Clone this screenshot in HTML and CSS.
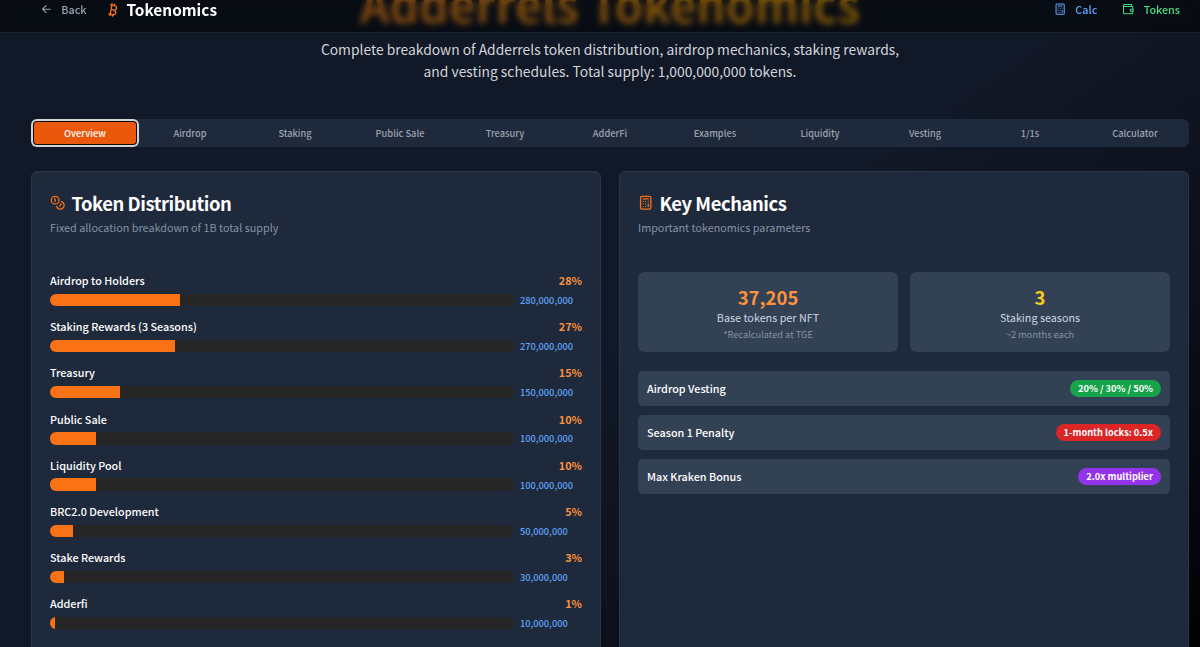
FILE: index.html
```html
<!DOCTYPE html>
<html lang="en">

<head>
    <meta charset="UTF-8">
    <meta name="viewport" content="width=device-width, initial-scale=1.0">
    <title>Tokenomics</title>
    <link rel="stylesheet" href="styles.css">
</head>

<body>
    <!-- Top bar -->
    <header class="topbar">
        <div class="topbar-group">
            <a class="back" href="#">
                <svg class="icon" viewBox="0 0 24 24"><path d="M12 5l-7 7 7 7M5 12h15"/></svg>
                <span>Back</span>
            </a>
            <div class="brand">
                <svg class="icon icon-btc" viewBox="0 0 24 24"><path d="M11.767 19.089c4.924.868 6.140-6.025 1.216-6.894m-1.216 6.894L5.860 18.047m5.908 1.042-.347 1.970m1.563-8.864c4.924.869 6.140-6.025 1.215-6.893m-1.215 6.893-3.940-.694m5.155-6.200L8.290 4.260m5.908 1.042.348-1.970M7.480 20.364l3.126-17.727"/></svg>
                <span>Tokenomics</span>
            </div>
        </div>
        <nav class="topbar-links">
            <a class="link-calc" href="#">
                <svg class="icon" viewBox="0 0 24 24"><rect x="4" y="2" width="16" height="20" rx="2"/><path d="M8 6h8M16 14v4M16 10h.01M12 10h.01M8 10h.01M12 14h.01M8 14h.01M12 18h.01M8 18h.01"/></svg>
                <span>Calc</span>
            </a>
            <a class="link-tokens" href="#">
                <svg class="icon" viewBox="0 0 24 24"><path d="M19 7V4a1 1 0 0 0-1-1H5a2 2 0 0 0 0 4h15a1 1 0 0 1 1 1v4h-3a2 2 0 0 0 0 4h3a1 1 0 0 0 1-1v-2a1 1 0 0 0-1-1M3 5v14a2 2 0 0 0 2 2h15a1 1 0 0 0 1-1v-4"/></svg>
                <span>Tokens</span>
            </a>
        </nav>
    </header>

    <main>
        <section class="hero">
            <h1>Adderrels Tokenomics</h1>
            <p>Complete breakdown of Adderrels token distribution, airdrop mechanics, staking rewards,<br>and vesting schedules. Total supply: 1,000,000,000 tokens.</p>
        </section>

        <div class="tabs">
            <button class="tab active">Overview</button>
            <button class="tab">Airdrop</button>
            <button class="tab">Staking</button>
            <button class="tab">Public Sale</button>
            <button class="tab">Treasury</button>
            <button class="tab">AdderFi</button>
            <button class="tab">Examples</button>
            <button class="tab">Liquidity</button>
            <button class="tab">Vesting</button>
            <button class="tab">1/1s</button>
            <button class="tab">Calculator</button>
        </div>

        <div class="cards">
            <section class="card">
                <h2>
                    <svg class="icon" viewBox="0 0 24 24"><circle cx="8" cy="8" r="6"/><path d="M18.090 10.370A6 6 0 1 1 10.340 18M7 6h1v4M16.710 13.880l.7.710-2.820 2.820"/></svg>
                    <span>Token Distribution</span>
                </h2>
                <p class="subtitle">Fixed allocation breakdown of 1B total supply</p>

                <div class="allocations">
                    <div class="allocation">
                        <div class="allocation-head"><span>Airdrop to Holders</span><b>28%</b></div>
                        <div class="allocation-row"><div class="bar"><div class="fill" style="width: 28%"></div></div><span class="amount">280,000,000</span></div>
                    </div>
                    <div class="allocation">
                        <div class="allocation-head"><span>Staking Rewards (3 Seasons)</span><b>27%</b></div>
                        <div class="allocation-row"><div class="bar"><div class="fill" style="width: 27%"></div></div><span class="amount">270,000,000</span></div>
                    </div>
                    <div class="allocation">
                        <div class="allocation-head"><span>Treasury</span><b>15%</b></div>
                        <div class="allocation-row"><div class="bar"><div class="fill" style="width: 15%"></div></div><span class="amount">150,000,000</span></div>
                    </div>
                    <div class="allocation">
                        <div class="allocation-head"><span>Public Sale</span><b>10%</b></div>
                        <div class="allocation-row"><div class="bar"><div class="fill" style="width: 10%"></div></div><span class="amount">100,000,000</span></div>
                    </div>
                    <div class="allocation">
                        <div class="allocation-head"><span>Liquidity Pool</span><b>10%</b></div>
                        <div class="allocation-row"><div class="bar"><div class="fill" style="width: 10%"></div></div><span class="amount">100,000,000</span></div>
                    </div>
                    <div class="allocation">
                        <div class="allocation-head"><span>BRC2.0 Development</span><b>5%</b></div>
                        <div class="allocation-row"><div class="bar"><div class="fill" style="width: 5%"></div></div><span class="amount">50,000,000</span></div>
                    </div>
                    <div class="allocation">
                        <div class="allocation-head"><span>Stake Rewards</span><b>3%</b></div>
                        <div class="allocation-row"><div class="bar"><div class="fill" style="width: 3%"></div></div><span class="amount">30,000,000</span></div>
                    </div>
                    <div class="allocation">
                        <div class="allocation-head"><span>Adderfi</span><b>1%</b></div>
                        <div class="allocation-row"><div class="bar"><div class="fill" style="width: 1%"></div></div><span class="amount">10,000,000</span></div>
                    </div>
                </div>
            </section>

            <section class="card">
                <h2>
                    <svg class="icon" viewBox="0 0 24 24"><rect x="4" y="2" width="16" height="20" rx="2"/><path d="M8 6h8M16 14v4M16 10h.01M12 10h.01M8 10h.01M12 14h.01M8 14h.01M12 18h.01M8 18h.01"/></svg>
                    <span>Key Mechanics</span>
                </h2>
                <p class="subtitle">Important tokenomics parameters</p>

                <div class="stats">
                    <div class="stat">
                        <div class="stat-value orange">37,205</div>
                        <div class="stat-label">Base tokens per NFT</div>
                        <div class="stat-note">*Recalculated at TGE</div>
                    </div>
                    <div class="stat">
                        <div class="stat-value yellow">3</div>
                        <div class="stat-label">Staking seasons</div>
                        <div class="stat-note">~2 months each</div>
                    </div>
                </div>

                <div class="rules">
                    <div class="rule"><span>Airdrop Vesting</span><span class="badge green">20% / 30% / 50%</span></div>
                    <div class="rule"><span>Season 1 Penalty</span><span class="badge red">1-month locks: 0.5x</span></div>
                    <div class="rule"><span>Max Kraken Bonus</span><span class="badge purple">2.0x multiplier</span></div>
                </div>
            </section>
        </div>
    </main>
</body>

</html>
```
FILE: styles.css
```css
* {
    box-sizing: border-box;
}

html {
    background: #000;
}

body {
    margin: 0;
    height: 647px;
    overflow: hidden;
    font-family: "Noto Sans CJK SC", "Noto Sans CJK JP", sans-serif;
    font-size: 10.8px;
    color: #fff;
    background: linear-gradient(145deg, #111827 0%, #111827 52%, #0c101b 74%, #020205 100%);
}

h1, h2, p {
    margin: 0;
}

a {
    color: inherit;
    text-decoration: none;
}

.icon {
    width: 12.3px;
    height: 12.3px;
    fill: none;
    stroke: currentColor;
    stroke-width: 2;
    stroke-linecap: round;
    stroke-linejoin: round;
    flex: none;
}

/* Top bar */
.topbar {
    position: fixed;
    top: 0;
    left: 0;
    right: 0;
    z-index: 10;
    height: 33px;
    padding: 0 20px 13px 40px;
    display: flex;
    align-items: center;
    justify-content: space-between;
    background: rgba(0, 0, 0, 0.5);
    border-bottom: 1px solid #1a2230;
    backdrop-filter: blur(3px);
}

.topbar-group,
.topbar-links,
.topbar a,
.brand {
    display: flex;
    align-items: center;
}

.topbar a {
    font-size: 10.8px;
    font-weight: 500;
}

.topbar a span {
    padding-bottom: 1px;
    line-height: 15px;
}

.topbar .back {
    gap: 9px;
    color: #9ca3af;
}

.topbar-group {
    gap: 18px;
}

.brand {
    gap: 6px;
    font-size: 15.4px;
    line-height: 14px;
    font-weight: 700;
}

.brand span {
    padding-bottom: 2px;
}

.icon-btc {
    width: 16px;
    height: 16px;
    color: #f97316;
}

.topbar-links {
    gap: 25px;
}

.topbar-links a {
    gap: 9px;
}

.link-calc {
    color: #60a5fa;
}

.link-tokens {
    color: #4ade80;
}

/* Hero */
.hero {
    text-align: center;
    padding-left: 20px;
}

.hero h1 {
    width: max-content;
    margin: -25px auto 0;
    font-size: 46px;
    line-height: 56px;
    font-weight: 700;
    color: transparent;
    background: linear-gradient(to right, #fb8c24, #f0a810);
    background-clip: text;
    -webkit-background-clip: text;
}

.hero p {
    margin-top: 7px;
    font-size: 13.85px;
    line-height: 22px;
    color: #d1d5db;
}

/* Tabs */
.tabs {
    display: grid;
    grid-template-columns: repeat(11, 1fr);
    gap: 3px;
    height: 28px;
    margin: 37px 11px 0 31px;
    padding: 3px;
    background: #1e293b;
    border-radius: 6px;
}

.tab {
    border: none;
    padding: 0;
    background: none;
    border-radius: 3px;
    color: #9ca3af;
    font-family: inherit;
    font-size: 9.25px;
    font-weight: 500;
}

.tab.active {
    background: #ea580c;
    color: #fff;
    box-shadow: 0 0 0 1px #0a0a0a, 0 0 0 3px #d4d4d4;
}

/* Cards */
.cards {
    display: grid;
    grid-template-columns: 1fr 1fr;
    gap: 18px;
    height: 480px;
    margin: 24px 11px 0 31px;
}

.card {
    padding: 17px 18px;
    background: #1e293b;
    border: 1px solid #2a3546;
    border-radius: 6px;
}

.card h2 {
    display: flex;
    align-items: center;
    gap: 6px;
    height: 27px;
    font-size: 18.45px;
    letter-spacing: -0.45px;
    font-weight: 700;
}

.card h2 .icon {
    width: 15.4px;
    height: 15.4px;
    color: #f97316;
}

.subtitle {
    margin-top: 3px;
    font-size: 10.8px;
    line-height: 16px;
    color: #8492a6;
}

.allocations {
    margin-top: 37px;
}

.allocation {
    height: 46.2px;
}

.allocation-head {
    display: flex;
    justify-content: space-between;
    height: 16px;
    line-height: 16px;
    font-weight: 500;
}

.allocation-head b {
    color: #fb923c;
    font-weight: 700;
}

.allocation-row {
    display: flex;
    align-items: center;
    gap: 6px;
    height: 12.3px;
    margin-top: 5.7px;
}

.bar {
    flex: 1;
    height: 12.3px;
    background: #262626;
    border-radius: 6px;
    overflow: hidden;
}

.fill {
    height: 100%;
    background: #f97316;
}

.amount {
    width: 62px;
    font-size: 9.25px;
    font-weight: 500;
    color: #60a5fa;
}

/* Key mechanics */
.stats {
    display: grid;
    grid-template-columns: 1fr 1fr;
    gap: 12px;
    margin-top: 37px;
}

.stat {
    height: 80px;
    padding-top: 13px;
    text-align: center;
    background: #334155;
    border-radius: 6px;
}

.stat-value {
    font-size: 18.5px;
    line-height: 25px;
    font-weight: 700;
}

.orange {
    color: #fb923c;
}

.yellow {
    color: #facc15;
}

.stat-label {
    line-height: 15px;
    color: #cbd5e1;
}

.stat-note {
    margin-top: 3px;
    font-size: 9.25px;
    line-height: 13px;
    color: #8492a6;
}

.rules {
    display: grid;
    gap: 9px;
    margin-top: 19px;
}

.rule {
    display: flex;
    align-items: center;
    justify-content: space-between;
    height: 35px;
    padding: 0 9px;
    background: #334155;
    border-radius: 5px;
    line-height: 15px;
    font-weight: 500;
}

.badge {
    padding: 0 8px;
    line-height: 17px;
    border-radius: 9px;
    font-size: 9.25px;
    font-weight: 700;
}

.green {
    background: #16a34a;
}

.red {
    background: #dc2626;
}

.purple {
    background: #9333ea;
}
```
